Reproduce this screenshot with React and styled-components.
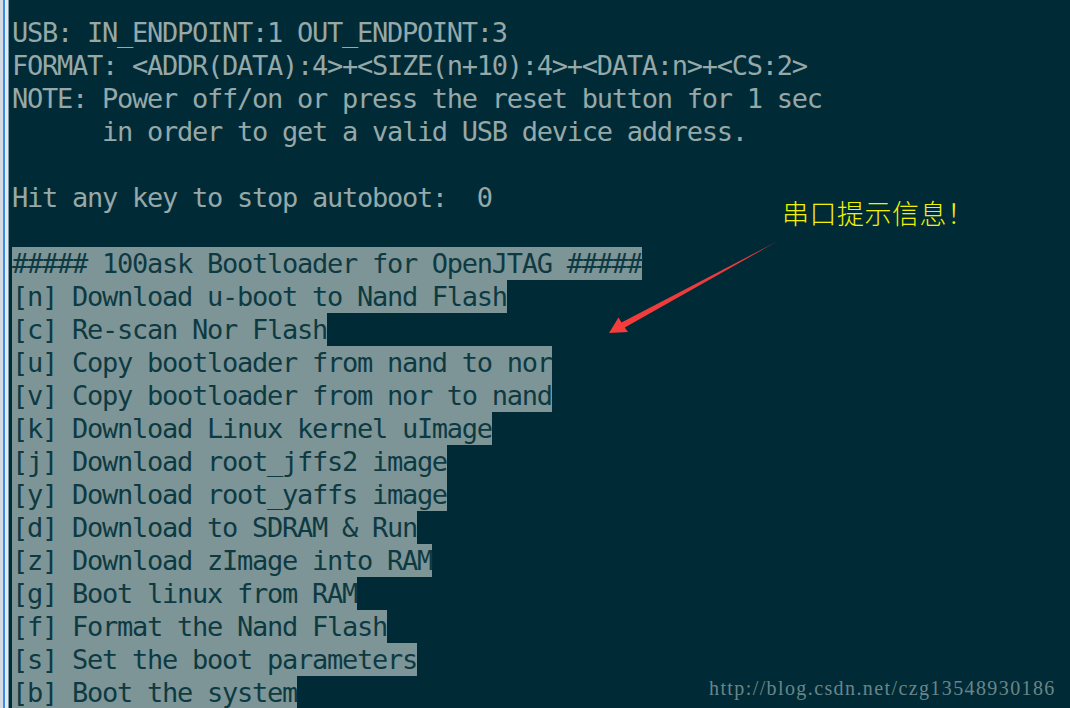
import React from "react";
import styled, { createGlobalStyle } from "styled-components";

const Global = createGlobalStyle`
  html, body { margin: 0; padding: 0; background: #002b36; }
  body { width: 1070px; height: 708px; overflow: hidden; }
`;

const Window = styled.div`
  position: relative;
  display: flex;
  width: 1070px;
  height: 708px;
  overflow: hidden;
`;

const Frame = styled.div`
  flex: 0 0 9px;
  background: linear-gradient(
    to right,
    #d5dbe2 0px,
    #d5dbe2 3px,
    #3d8de4 3px,
    #3d8de4 5px,
    #e4eaf1 5px,
    #e4eaf1 8px,
    #7f98a6 8px,
    #7f98a6 9px
  );
`;

const Terminal = styled.div`
  flex: 1;
  background: #002b36;
  padding: 16px 0 0 3px;
  font-family: "DejaVu Sans Mono", "Liberation Mono", monospace;
  font-size: 27px;
  letter-spacing: -1.26px;
  color: #97a8a8;
`;

const Row = styled.div`
  height: 33px;
  line-height: 33px;
  white-space: pre;
`;

const Text = styled.span`
  display: inline-block;
  height: 33px;
  background: ${(p) => (p.$selected ? "#7e9597" : "transparent")};
  color: ${(p) => (p.$selected ? "#0d3a42" : "inherit")};
`;

const Note = styled.div`
  position: absolute;
  left: 782px;
  top: 197px;
  font-family: "Noto Sans CJK SC", sans-serif;
  font-weight: 300;
  font-size: 27px;
  line-height: 32px;
  color: #f2f200;
  letter-spacing: 0.5px;
`;

const Watermark = styled.div`
  position: absolute;
  left: 709px;
  top: 676px;
  font-family: "Liberation Serif", serif;
  font-size: 20px;
  line-height: 24px;
  letter-spacing: 1.4px;
  color: #6a8588;
  white-space: nowrap;
`;

const Overlay = styled.svg`
  position: absolute;
  left: 0;
  top: 0;
  pointer-events: none;
`;

const plain = [
  "USB: IN_ENDPOINT:1 OUT_ENDPOINT:3",
  "FORMAT: <ADDR(DATA):4>+<SIZE(n+10):4>+<DATA:n>+<CS:2>",
  "NOTE: Power off/on or press the reset button for 1 sec",
  "      in order to get a valid USB device address.",
  "",
  "Hit any key to stop autoboot:  0",
  "",
];

const menu = [
  "##### 100ask Bootloader for OpenJTAG #####",
  "[n] Download u-boot to Nand Flash",
  "[c] Re-scan Nor Flash",
  "[u] Copy bootloader from nand to nor",
  "[v] Copy bootloader from nor to nand",
  "[k] Download Linux kernel uImage",
  "[j] Download root_jffs2 image",
  "[y] Download root_yaffs image",
  "[d] Download to SDRAM & Run",
  "[z] Download zImage into RAM",
  "[g] Boot linux from RAM",
  "[f] Format the Nand Flash",
  "[s] Set the boot parameters",
  "[b] Boot the system",
];

export default function App() {
  return (
    <>
      <Global />
      <Window>
        <Frame />
        <Terminal>
          {plain.map((l, i) => (
            <Row key={"p" + i}>
              <Text>{l}</Text>
            </Row>
          ))}
          {menu.map((l, i) => (
            <Row key={"m" + i}>
              <Text $selected>{l}</Text>
            </Row>
          ))}
        </Terminal>
        <Note>串口提示信息！</Note>
        <Watermark>http://blog.csdn.net/czg13548930186</Watermark>
        <Overlay width="1070" height="708" viewBox="0 0 1070 708">
          <defs>
            <linearGradient id="ag" x1="778" y1="241" x2="610" y2="332" gradientUnits="userSpaceOnUse">
              <stop offset="0" stopColor="#8a2a33" />
              <stop offset="0.15" stopColor="#e83a3e" />
              <stop offset="1" stopColor="#f43c3c" />
            </linearGradient>
          </defs>
          <polygon
            points="778,241 621.5,322.5 618.5,317.5 609,333 628,332 624.8,327.6"
            fill="url(#ag)"
          />
        </Overlay>
      </Window>
    </>
  );
}
